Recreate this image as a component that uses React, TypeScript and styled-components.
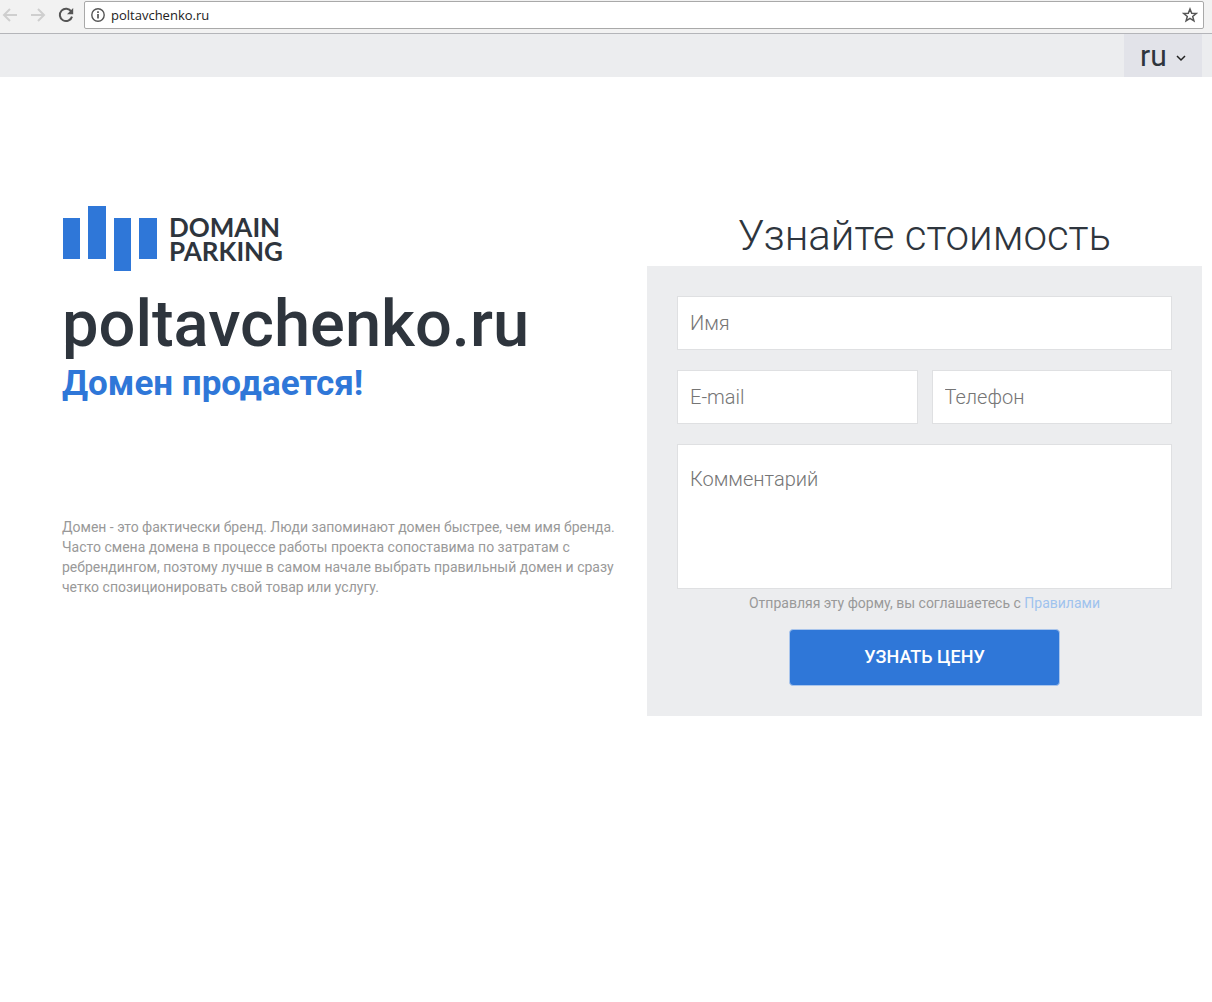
import React, { useState } from "react";
import styled, { createGlobalStyle } from "styled-components";

const GlobalStyle = createGlobalStyle`
  * {
    box-sizing: border-box;
  }

  body {
    margin: 0;
    background: #fff;
    color: #2e353d;
    font-family: Roboto, "Liberation Sans", sans-serif;
  }
`;

const BrowserBar = styled.header`
  display: flex;
  align-items: center;
  gap: 4px;
  height: 34px;
  padding: 0 8px 3px 0;
  background: #f2f2f2;
  border-bottom: 1px solid #b4b5b9;
`;

const NavButton = styled.button<{ $muted?: boolean }>`
  display: flex;
  align-items: center;
  justify-content: center;
  width: 24px;
  height: 24px;
  padding: 0 4px 0 0;
  border: 0;
  background: none;
  color: ${(p) => (p.$muted ? "#cfcfcf" : "#555")};
`;

const AddressBar = styled.div`
  display: flex;
  flex: 1;
  align-items: center;
  gap: 6px;
  height: 28px;
  padding: 0 5px 0 6px;
  background: #fff;
  border: 1px solid #a9a9a9;
  border-radius: 2px;
  color: #555;
`;

const AddressInput = styled.input`
  flex: 1;
  min-width: 0;
  padding: 0;
  border: 0;
  outline: 0;
  background: none;
  color: #222;
  font: 13px/20px "Open Sans", "Noto Sans", sans-serif;
`;

const StarButton = styled.button`
  display: flex;
  padding: 0;
  border: 0;
  background: none;
  color: #555;
`;

const LanguageBar = styled.nav`
  display: flex;
  justify-content: flex-end;
  height: 43px;
  padding-right: 10px;
  background: #ecedef;
`;

const LanguagePicker = styled.label`
  display: grid;
  align-items: center;
  width: 78px;
  background: #e2e3e9;

  > * {
    grid-area: 1 / 1;
  }

  > svg {
    justify-self: end;
    margin: 6px 16px 0 0;
    pointer-events: none;
  }
`;

const LanguageSelect = styled.select`
  width: 100%;
  height: 43px;
  padding: 0 16px;
  border: 0;
  background: none;
  color: #2e353d;
  font: 30px/43px Roboto, sans-serif;
  appearance: none;
`;

const Columns = styled.main`
  display: grid;
  grid-template-columns: 1fr 1fr;
  gap: 30px;
  padding: 129px 10px 40px 62px;

  @media (max-width: 800px) {
    grid-template-columns: 1fr;
    padding: 40px 20px;
  }
`;

const Column = styled.section`
  min-width: 0;
`;

const Logo = styled.a`
  display: flex;
  align-items: center;
  gap: 11px;
  color: #2e353d;
  text-decoration: none;
`;

const LogoName = styled.span`
  font: 700 26px/24px Lato, sans-serif;
`;

const DomainName = styled.h1`
  margin: 18px 0 0;
  font-size: 65px;
  font-weight: 500;
  line-height: 70px;
`;

const Slogan = styled.p`
  margin: 0;
  color: #2f77d8;
  font-size: 35px;
  font-weight: 700;
  line-height: 50px;
`;

const Description = styled.p`
  margin: 108px 0 0;
  color: #999;
  font-size: 14px;
  line-height: 20px;
`;

const FormTitle = styled.h2`
  margin: 0;
  font-size: 42px;
  font-weight: 300;
  line-height: 60px;
  text-align: center;
`;

const Form = styled.form`
  display: grid;
  grid-template-columns: 1fr 1fr;
  gap: 20px 14px;
  padding: 30px;
  background: #ecedef;
`;

const Field = styled.label<{ $wide?: boolean }>`
  display: flex;
  grid-column: ${(p) => (p.$wide ? "1 / -1" : "auto")};

  > input,
  > textarea {
    width: 100%;
    height: 54px;
    padding: 0 12px;
    background: #fff;
    border: 1px solid #dfe0e2;
    border-radius: 0;
    color: #2e353d;
    font: 300 20px/28px Roboto, sans-serif;
    resize: none;
  }

  > textarea {
    height: 145px;
    padding: 20px 12px;
  }

  > ::placeholder {
    color: #757575;
    opacity: 1;
  }
`;

const Submission = styled.div`
  display: flex;
  grid-column: 1 / -1;
  flex-direction: column;
  align-items: center;
  gap: 16px;
  margin-top: -16px;
`;

const Terms = styled.p`
  margin: 0;
  color: #999;
  font-size: 14px;
  line-height: 20px;
`;

const TermsLink = styled.a`
  color: #9fc3ee;
  text-decoration: none;
`;

const SubmitButton = styled.button`
  width: 271px;
  height: 57px;
  padding: 0 0 2px;
  border: 1px solid #a9c5ec;
  border-radius: 4px;
  background: #2f77d8;
  color: #fff;
  font: 500 18px/24px Roboto, sans-serif;
  text-transform: uppercase;
`;

const Arrow = ({ forward }: { forward?: boolean }) => (
  <svg width="16" height="16" viewBox="0 0 16 16" fill="none" stroke="currentColor" strokeWidth="2" aria-hidden="true">
    <path d={forward ? "M1 8h13M8 2l6 6-6 6" : "M15 8H2M8 2L2 8l6 6"} />
  </svg>
);

const Reload = () => (
  <svg width="16" height="16" viewBox="0 0 16 16" aria-hidden="true">
    <path d="M13.3 4.6A6.2 6.2 0 1 0 14 9.6" fill="none" stroke="currentColor" strokeWidth="2" />
    <path d="M15.2 1v6.200H9z" fill="currentColor" />
  </svg>
);

const Info = () => (
  <svg width="14" height="14" viewBox="0 0 14 14" fill="none" stroke="currentColor" aria-hidden="true">
    <circle cx="7" cy="7" r="6.2" strokeWidth="1.4" />
    <path d="M7 6v4.5M7 3.2v1.7" strokeWidth="1.7" />
  </svg>
);

const Star = () => (
  <svg width="16" height="16" viewBox="0 0 16 16" fill="none" stroke="currentColor" strokeWidth="1.5" aria-hidden="true">
    <path d="M8 2l1.7 4.2 4.5.3-3.5 2.9 1.2 4.4L8 11.3l-3.9 2.5 1.2-4.4L1.8 6.5l4.5-.3z" />
  </svg>
);

const Chevron = () => (
  <svg width="10" height="7" viewBox="0 0 10 7" fill="none" stroke="#222" strokeWidth="1.5" aria-hidden="true">
    <path d="M1 1l4 4 4-4" />
  </svg>
);

const LogoMark = () => (
  <svg width="96" height="65" viewBox="0 0 96 65" fill="#2f77d8" aria-hidden="true">
    <path d="M1 12h17v41H1zM26 0h18v53H26zM52 12h17v53H52zM77 12h18v41H77z" />
  </svg>
);

export default function App() {
  const [address, setAddress] = useState("poltavchenko.ru");

  return (
    <>
      <GlobalStyle />
      <BrowserBar>
        <NavButton $muted aria-label="Назад"><Arrow /></NavButton>
        <NavButton $muted aria-label="Вперёд"><Arrow forward /></NavButton>
        <NavButton aria-label="Обновить"><Reload /></NavButton>
        <AddressBar>
          <Info />
          <AddressInput aria-label="Адрес" value={address} onChange={(e) => setAddress(e.target.value)} />
          <StarButton aria-label="В закладки"><Star /></StarButton>
        </AddressBar>
      </BrowserBar>
      <LanguageBar>
        <LanguagePicker>
          <LanguageSelect aria-label="Язык">
            <option>ru</option>
          </LanguageSelect>
          <Chevron />
        </LanguagePicker>
      </LanguageBar>
      <Columns>
        <Column>
          <Logo href="#">
            <LogoMark />
            <LogoName>DOMAIN<br />PARKING</LogoName>
          </Logo>
          <DomainName>poltavchenko.ru</DomainName>
          <Slogan>Домен продается!</Slogan>
          <Description>
            Домен - это фактически бренд. Люди запоминают домен быстрее, чем имя бренда. Часто смена
            домена в процессе работы проекта сопоставима по затратам с ребрендингом, поэтому лучше в
            самом начале выбрать правильный домен и сразу четко спозиционировать свой товар или услугу.
          </Description>
        </Column>
        <Column>
          <FormTitle>Узнайте стоимость</FormTitle>
          <Form onSubmit={(e) => e.preventDefault()}>
            <Field $wide><input type="text" placeholder="Имя" aria-label="Имя" /></Field>
            <Field><input type="email" placeholder="E-mail" aria-label="E-mail" /></Field>
            <Field><input type="tel" placeholder="Телефон" aria-label="Телефон" /></Field>
            <Field $wide><textarea placeholder="Комментарий" aria-label="Комментарий" /></Field>
            <Submission>
              <Terms>
                Отправляя эту форму, вы соглашаетесь с <TermsLink href="#">Правилами</TermsLink>
              </Terms>
              <SubmitButton type="submit">Узнать цену</SubmitButton>
            </Submission>
          </Form>
        </Column>
      </Columns>
    </>
  );
}
